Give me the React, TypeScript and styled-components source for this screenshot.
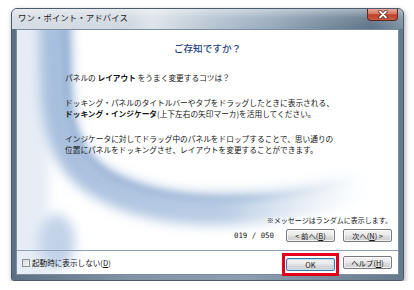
import React from "react";
import styled, { createGlobalStyle } from "styled-components";

const Global = createGlobalStyle`
  html, body { margin: 0; padding: 0; background: #ffffff; }
  body { font-family: "Noto Sans CJK JP", "Noto Sans", sans-serif; }
  * { box-sizing: border-box; }
`;

const Window = styled.div`
  margin: 8px 0 0 11px;
  width: 393px;
  height: 273px;
  border: 1px solid #4a5b6d;
  border-radius: 6px 6px 3px 3px;
  background: #6f8195;
  box-shadow: 1px 2px 5px rgba(0, 0, 0, 0.35);
  display: flex;
  flex-direction: column;
  overflow: hidden;
`;

const TitleBar = styled.div`
  height: 20px;
  flex: none;
  display: flex;
  align-items: flex-start;
  justify-content: space-between;
  padding: 0 5px 0 6px;
  background:
    linear-gradient(180deg, rgba(255,255,255,0.45) 0px, rgba(255,255,255,0.1) 9px, rgba(255,255,255,0) 20px),
    linear-gradient(90deg, #d5dce4 0%, #d0d8e1 30%, #dde4ea 36%, #b9c6d3 50%, #98aabd 66%, #768b9f 80%, #5f7489 92%, #7d8fa2 100%);
`;

const Title = styled.span`
  padding-top: 3px;
  font-size: 8.4px;
  line-height: 10px;
  color: #1b1b1b;
  letter-spacing: 0.1px;
`;

const CloseButton = styled.div`
  width: 31px;
  height: 12px;
  border: 1px solid #5a2a24;
  border-top: none;
  border-radius: 0 0 4px 4px;
  background: linear-gradient(180deg, #e9a899 0%, #d67661 45%, #c13f2a 52%, #c95a41 100%);
  display: flex;
  align-items: center;
  justify-content: center;
`;

const Frame = styled.div`
  flex: 1;
  display: flex;
  padding: 0 4px 5px 4px;
  background: linear-gradient(90deg, #5d6f82 0%, #8293a6 30%, #8c9db0 60%, #66788b 100%);
`;

const Client = styled.div`
  position: relative;
  flex: 1;
  background: #ffffff;
  border: 1px solid #7b8ea2;
  display: flex;
  flex-direction: column;
`;

const DecorBox = styled.div`
  position: absolute;
  inset: 0;
  overflow: hidden;
  z-index: 0;
`;

const Content = styled.div`
  position: relative;
  z-index: 1;
  flex: 1;
  display: flex;
  flex-direction: column;
`;

const Heading = styled.h1`
  margin: 12px 0 0;
  font-size: 9.6px;
  line-height: 12px;
  font-weight: 500;
  color: #23437c;
  text-align: center;
`;

const Body = styled.div`
  margin-top: 18px;
  padding-left: 48px;
  font-size: 7.7px;
  line-height: 11px;
  color: #141414;
`;

const Para = styled.p`
  margin: 0 0 14px;
  &:last-child { margin-bottom: 0; }
`;

const Strong = styled.b`
  font-weight: 700;
`;

const Notice = styled.div`
  margin-top: auto;
  padding-right: 6px;
  text-align: right;
  font-size: 7px;
  line-height: 10px;
  color: #141414;
`;

const NavRow = styled.div`
  display: flex;
  justify-content: flex-end;
  align-items: center;
  gap: 8px;
  margin: 4px 0 8px;
  padding-right: 6px;
`;

const Counter = styled.span`
  font-family: "DejaVu Sans Mono", "Liberation Mono", monospace;
  font-size: 7.4px;
  color: #222;
  margin-right: 4px;
`;

const Button = styled.button<{ $primary?: boolean }>`
  width: 49px;
  height: 13px;
  padding: 0;
  border: 1px solid ${(p) => (p.$primary ? "#3d7bad" : "#7a7a7a")};
  border-radius: 2px;
  background: linear-gradient(180deg, #f3f3f3 0%, #ebebeb 48%, #dddddd 52%, #cfcfcf 100%);
  box-shadow: inset 0 0 0 1px ${(p) => (p.$primary ? "#bfe0f6" : "rgba(255,255,255,0.7)")};
  font-family: "Noto Sans CJK JP", sans-serif;
  font-size: 7.4px;
  line-height: 11px;
  color: #151515;
  display: flex;
  align-items: center;
  justify-content: center;
`;

const Footer = styled.div`
  height: 24px;
  flex: none;
  border-top: 1px solid #8fa1b4;
  display: flex;
  align-items: center;
  padding: 0 6px 0 5px;
`;

const Check = styled.span`
  width: 8px;
  height: 8px;
  border: 1px solid #8e8f8f;
  background: linear-gradient(135deg, #d8d8d8 0%, #f6f6f6 100%);
  flex: none;
`;

const CheckLabel = styled.span`
  margin-left: 2px;
  font-size: 7.6px;
  line-height: 10px;
  color: #141414;
`;

const Spacer = styled.div`
  flex: 1;
`;

const Highlight = styled.div`
  align-self: flex-start;
  margin-top: 2px;
  border: 3px solid #e2001a;
  padding: 2px 1px;
`;

const HelpButton = styled(Button)`
  margin-left: 4px;
`;

const U = styled.span`
  text-decoration: underline;
`;

function Decor() {
  return (
    <DecorBox>
      <svg width="381" height="244" viewBox="0 0 381 244">
        <defs>
          <filter id="blurA" x="-50%" y="-50%" width="200%" height="200%">
            <feGaussianBlur stdDeviation="6" />
          </filter>
          <filter id="blurB" x="-50%" y="-50%" width="200%" height="200%">
            <feGaussianBlur stdDeviation="3" />
          </filter>
          <linearGradient id="fade" x1="0" y1="0" x2="381" y2="0" gradientUnits="userSpaceOnUse">
            <stop offset="0" stopColor="#a3bcdc" stopOpacity="1" />
            <stop offset="0.55" stopColor="#b3c8e2" stopOpacity="0.9" />
            <stop offset="0.92" stopColor="#d3e0ee" stopOpacity="0" />
          </linearGradient>
          <linearGradient id="fade2" x1="0" y1="0" x2="381" y2="0" gradientUnits="userSpaceOnUse">
            <stop offset="0" stopColor="#86a4cc" stopOpacity="0.75" />
            <stop offset="0.6" stopColor="#9ab4d5" stopOpacity="0.65" />
            <stop offset="0.9" stopColor="#c9d8ea" stopOpacity="0" />
          </linearGradient>
        </defs>
        <rect x="-10" y="-10" width="42" height="264" fill="#e6edf5" filter="url(#blurA)" />
        <path
          d="M 38 -10 C 42 60, 28 124, 90 156 C 150 188, 250 186, 345 154"
          fill="none"
          stroke="url(#fade)"
          strokeWidth="32"
          filter="url(#blurA)"
        />
        <path
          d="M 48 -10 C 52 60, 40 116, 98 148 C 154 176, 250 176, 338 150"
          fill="none"
          stroke="url(#fade2)"
          strokeWidth="6"
          filter="url(#blurB)"
        />
        <ellipse cx="40" cy="212" rx="18" ry="28" fill="#c2d3e8" filter="url(#blurA)" />
      </svg>
    </DecorBox>
  );
}

function CloseIcon() {
  return (
    <svg width="10" height="9" viewBox="0 0 10 9">
      <path d="M2 1.5 L8 7.5 M8 1.5 L2 7.5" stroke="#5a2019" strokeWidth="3.2" strokeLinecap="round" />
      <path d="M2 1.5 L8 7.5 M8 1.5 L2 7.5" stroke="#ffffff" strokeWidth="1.8" strokeLinecap="round" />
    </svg>
  );
}

export default function App() {
  return (
    <>
      <Global />
      <Window>
        <TitleBar>
          <Title>ワン・ポイント・アドバイス</Title>
          <CloseButton>
            <CloseIcon />
          </CloseButton>
        </TitleBar>
        <Frame>
          <Client>
            <Decor />
            <Content>
              <Heading>ご存知ですか？</Heading>
              <Body>
                <Para>
                  パネルの <Strong>レイアウト</Strong> をうまく変更するコツは？
                </Para>
                <Para>
                  ドッキング・パネルのタイトルバーやタブをドラッグしたときに表示される、
                  <br />
                  <Strong>ドッキング・インジケータ</Strong>(上下左右の矢印マーカ)を活用してください。
                </Para>
                <Para>
                  インジケータに対してドラッグ中のパネルをドロップすることで、思い通りの
                  <br />
                  位置にパネルをドッキングさせ、レイアウトを変更することができます。
                </Para>
              </Body>
              <Notice>※メッセージはランダムに表示します。</Notice>
              <NavRow>
                <Counter>019 / 050</Counter>
                <Button>
                  &lt; 前へ(<U>B</U>)
                </Button>
                <Button>
                  次へ(<U>N</U>) &gt;
                </Button>
              </NavRow>
              <Footer>
                <Check />
                <CheckLabel>
                  起動時に表示しない(<U>D</U>)
                </CheckLabel>
                <Spacer />
                <Highlight>
                  <Button $primary>OK</Button>
                </Highlight>
                <HelpButton>
                  ヘルプ(<U>H</U>)
                </HelpButton>
              </Footer>
            </Content>
          </Client>
        </Frame>
      </Window>
    </>
  );
}
